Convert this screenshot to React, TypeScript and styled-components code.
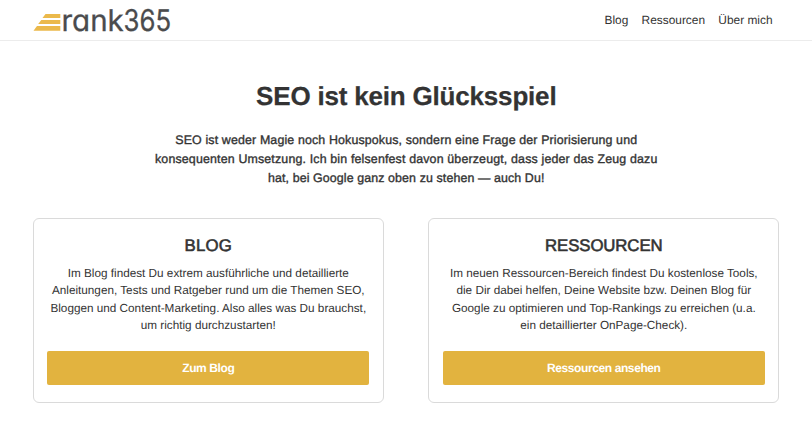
import React from "react";
import styled, { createGlobalStyle } from "styled-components";

const GlobalStyle = createGlobalStyle`
  *, *::before, *::after { box-sizing: border-box; }
  body {
    margin: 0;
    background: #fff;
    color: #333;
    font-family: "Liberation Sans", Arial, sans-serif;
    text-rendering: geometricPrecision;
  }
  h1, h2, p { margin: 0; }
`;

const Page = styled.div`
  height: 426px;
  overflow: hidden;
`;

const Header = styled.header`
  height: 41px;
  padding: 0 39.5px 0 33px;
  display: flex;
  align-items: center;
  justify-content: space-between;
  border-bottom: 1px solid #ececec;
`;

const Logo = styled.a`
  display: flex;
  height: 40px;
`;

const Nav = styled.nav`
  display: flex;
  gap: 13.3px;
`;

const NavLink = styled.a`
  font-size: 11.9px;
  line-height: 18px;
  color: #333;
`;

const Main = styled.main`
  padding: 37px 32.3px 0 32.8px;
  text-align: center;
`;

const Title = styled.h1`
  font-size: 26px;
  line-height: 36px;
  font-weight: 700;
  letter-spacing: -0.19px;
  color: #333;
  -webkit-text-stroke: 0.25px #333;
`;

const Intro = styled.p`
  margin-top: 17px;
  font-size: 12.4px;
  line-height: 19px;
  -webkit-text-stroke: 0.35px #333;
`;

const Line = styled.span<{ $spacing: number }>`
  display: block;
  white-space: nowrap;
  letter-spacing: ${(p) => p.$spacing}px;
`;

const Cards = styled.section`
  margin-top: 30px;
  display: grid;
  grid-template-columns: 351px 351px;
  gap: 44.5px;
`;

const Card = styled.article`
  height: 185px;
  padding: 14px 13.4px 13px;
  border: 1px solid #dadada;
  border-radius: 6px;
  display: flex;
  flex-direction: column;
`;

const CardTitle = styled.h2<{ $spacing: number }>`
  font-size: 16.8px;
  line-height: 26px;
  font-weight: 400;
  letter-spacing: ${(p) => p.$spacing}px;
  -webkit-text-stroke: 0.6px #333;
`;

const CardText = styled.p`
  margin-top: 5.6px;
  font-size: 11.74px;
  line-height: 17.5px;
`;

const Button = styled.a`
  margin-top: auto;
  margin-bottom: 4px;
  height: 34px;
  padding-top: 1px;
  line-height: 33px;
  border-radius: 2px;
  background: #e2b33f;
  color: #fff;
  font-size: 12px;
  font-weight: 700;
  letter-spacing: -0.4px;
`;

type TextLine = [string, number];

const nav = ["Blog", "Ressourcen", "Über mich"];

const intro: TextLine[] = [
  ["SEO ist weder Magie noch Hokuspokus, sondern eine Frage der Priorisierung und", 0.14],
  ["konsequenten Umsetzung. Ich bin felsenfest davon überzeugt, dass jeder das Zeug dazu", 0.16],
  ["hat, bei Google ganz oben zu stehen — auch Du!", 0.11],
];

const cards: { title: TextLine; lines: string[]; action: string }[] = [
  {
    title: ["BLOG", 0.2],
    lines: [
      "Im Blog findest Du extrem ausführliche und detaillierte",
      "Anleitungen, Tests und Ratgeber rund um die Themen SEO,",
      "Bloggen und Content-Marketing. Also alles was Du brauchst,",
      "um richtig durchzustarten!",
    ],
    action: "Zum Blog",
  },
  {
    title: ["RESSOURCEN", -0.1],
    lines: [
      "Im neuen Ressourcen-Bereich findest Du kostenlose Tools,",
      "die Dir dabei helfen, Deine Website bzw. Deinen Blog für",
      "Google zu optimieren und Top-Rankings zu erreichen (u.a.",
      "ein detaillierter OnPage-Check).",
    ],
    action: "Ressourcen ansehen",
  },
];

const LogoWord = styled.text`
  font-family: Inter, Lato, sans-serif;
  font-size: 30px;
  font-weight: 400;
  font-feature-settings: "cv11" 1;
  fill: #4a4b4d;
  stroke: #4a4b4d;
  stroke-width: 0.3px;
`;

export default function App() {
  return (
    <Page>
      <GlobalStyle />
      <Header>
        <Logo>
          <svg width="150" height="40" viewBox="0 0 150 40">
            <g fill="#ebb94b">
              <path d="M12.5 14H27.3v4H9.5z" />
              <path d="M8.3 20H27.3v4H5.2z" />
              <path d="M4 26H27.3v4.7H.5z" />
            </g>
            <LogoWord x="28.5" y="31" textLength="62.3" lengthAdjust="spacingAndGlyphs">rank</LogoWord>
            <LogoWord x="90.5" y="31" textLength="47.6" lengthAdjust="spacingAndGlyphs">365</LogoWord>
          </svg>
        </Logo>
        <Nav>
          {nav.map((text) => (
            <NavLink key={text}>{text}</NavLink>
          ))}
        </Nav>
      </Header>
      <Main>
        <Title>SEO ist kein Glücksspiel</Title>
        <Intro>
          {intro.map(([text, spacing]) => (
            <Line key={text} $spacing={spacing}>{text} </Line>
          ))}
        </Intro>
        <Cards>
          {cards.map((card) => (
            <Card key={card.title[0]}>
              <CardTitle $spacing={card.title[1]}>{card.title[0]}</CardTitle>
              <CardText>
                {card.lines.map((text) => (
                  <Line key={text} $spacing={0}>{text} </Line>
                ))}
              </CardText>
              <Button>{card.action}</Button>
            </Card>
          ))}
        </Cards>
      </Main>
    </Page>
  );
}
